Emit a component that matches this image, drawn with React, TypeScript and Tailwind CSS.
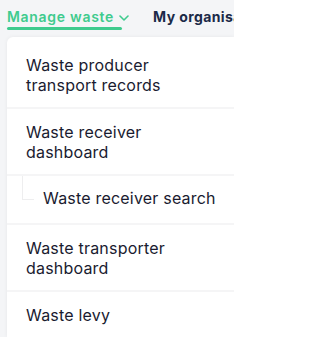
import React from "react";

type Item = { label: string; nested?: boolean };

const items: Item[] = [
  { label: "Waste producer transport records" },
  { label: "Waste receiver dashboard" },
  { label: "Waste receiver search", nested: true },
  { label: "Waste transporter dashboard" },
  { label: "Waste levy" },
];

function Chevron() {
  return (
    <svg width="10" height="6" viewBox="0 0 10 6" fill="none" className="ml-[5px] mt-[2px]">
      <path d="M1 1l4 4 4-4" stroke="#3fcb8e" strokeWidth="1.6" strokeLinecap="round" strokeLinejoin="round" />
    </svg>
  );
}

export default function App() {
  return (
    <div
      className="w-[234px] h-[337px] overflow-hidden bg-[#f4f5f7]"
      style={{ fontFamily: "Inter, 'Noto Sans', sans-serif" }}
    >
      {/* Top nav */}
      <div className="flex items-start h-[37px] pl-[7px] whitespace-nowrap">
        <div className="flex flex-col pt-[9px]">
          <div className="flex items-center text-[14px] leading-[16px] font-semibold tracking-[0.7px] text-[#3fcb8e]">
            Manage waste
            <Chevron />
          </div>
          <div className="mt-[2px] h-[3px] w-[115px] rounded-full bg-[#3fcb8e]" />
        </div>
        <div className="ml-[24px] pt-[9px] text-[14px] leading-[16px] font-bold tracking-[0.4px] text-[#1b2a48]">
          My organisation
        </div>
      </div>

      {/* Dropdown panel */}
      <div className="ml-[7px] bg-white rounded-tl-[6px] shadow-[0_0_4px_rgba(0,0,0,0.06)] pt-[5px]">
        {items.map((item, i) => (
          <div key={i}>
            {i > 0 && <div className="h-[2px] bg-[#f5f5f6]" />}
            {item.nested ? (
              <div className="relative pl-[36px] pt-[12px] pb-[15px] text-[16px] leading-[20px] tracking-[0.2px] text-[#1a1b30]">
                <div className="absolute left-[15px] top-0 h-[24px] w-[12px] border-l border-b border-[#eeeeef]" />
                Waste receiver search
              </div>
            ) : (
              <div className="pl-[19px] pr-[40px] pt-[13px] pb-[12px] text-[16px] leading-[20px] tracking-[0.2px] text-[#1a1b30]">
                {item.label}
              </div>
            )}
          </div>
        ))}
      </div>
    </div>
  );
}
